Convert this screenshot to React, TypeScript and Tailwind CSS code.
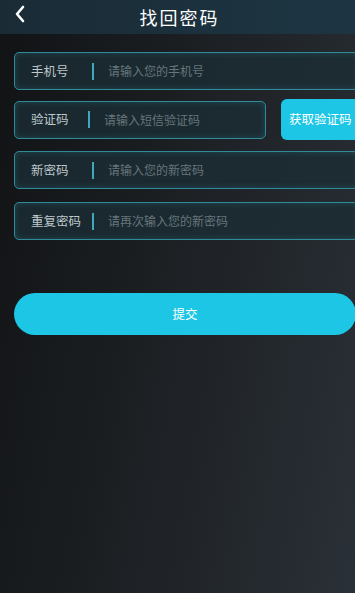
import { useState } from "react";

const FONT = { fontFamily: '"Noto Sans CJK SC", "Noto Sans", sans-serif' };

interface FieldProps {
  label: string;
  placeholder: string;
  labelWidth: string;
  className?: string;
}

function Field({ label, placeholder, labelWidth, className = "w-[345px]" }: FieldProps) {
  const [value, setValue] = useState("");
  return (
    <div
      className={`flex h-[38px] shrink-0 items-center rounded-[5px] border border-[#2f8a9a] bg-[#1b2d35]/80 shadow-[inset_0_0_6px_rgba(60,170,190,0.25)] ${className}`}
    >
      <span className={`shrink-0 pl-[16px] text-[12.5px] text-[#bfc8cc] ${labelWidth}`}>{label}</span>
      <span className="h-[17px] w-[2px] shrink-0 bg-[#3fa9bb]" />
      <input
        value={value}
        onChange={(e) => setValue(e.target.value)}
        placeholder={placeholder}
        className="min-w-0 flex-1 bg-transparent pl-[14px] text-[12px] text-[#c9d2d6] outline-none placeholder:text-[#66767c]"
      />
    </div>
  );
}

export default function App() {
  return (
    <div
      style={FONT}
      className="relative h-[593px] w-[355px] overflow-hidden bg-[linear-gradient(100deg,#111315_0%,#1b1e21_40%,#2a3037_100%)]"
    >
      <header className="relative flex h-[34px] items-center justify-center bg-[linear-gradient(90deg,#1a2b36,#1d3543)]">
        <button type="button" className="absolute left-[13px] top-[4px] text-white" aria-label="back">
          <svg width="14" height="20" viewBox="0 0 14 20" fill="none">
            <path d="M10 3 L4 10 L10 17" stroke="#fff" strokeWidth="2.6" strokeLinecap="round" strokeLinejoin="round" />
          </svg>
        </button>
        <h1 className="pl-[4px] text-[18px] tracking-[2px] text-white">找回密码</h1>
      </header>

      <div className="flex flex-col pl-[14px] pt-[18px]">
        <Field label="手机号" placeholder="请输入您的手机号" labelWidth="w-[77px]" />
        <div className="mt-[9px] flex h-[41px] items-center gap-[15px]">
          <Field label="验证码" placeholder="请输入短信验证码" labelWidth="w-[73px]" className="w-[252px]" />
          <button
            type="button"
            className="h-[41px] w-[80px] shrink-0 rounded-[6px] bg-[#1ec6e6] pl-[8px] text-left text-[12.5px] text-white"
          >
            获取验证码
          </button>
        </div>
        <div className="mt-[11px] flex flex-col gap-[13px]">
          <Field label="新密码" placeholder="请输入您的新密码" labelWidth="w-[77px]" />
          <Field label="重复密码" placeholder="请再次输入您的新密码" labelWidth="w-[77px]" />
        </div>
      </div>

      <div className="pl-[14px] pt-[53px]">
        <button
          type="button"
          className="h-[42px] w-[342px] rounded-full bg-[#1ec6e6] text-[12.5px] text-white"
        >
          提交
        </button>
      </div>
    </div>
  );
}
